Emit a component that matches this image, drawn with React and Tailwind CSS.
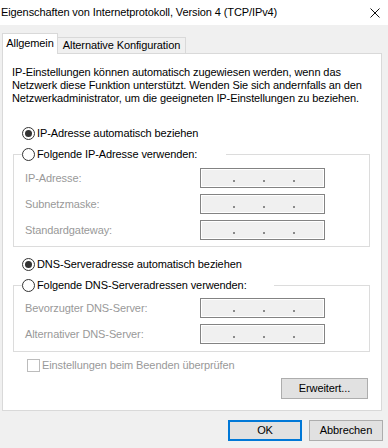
import React from "react";

function Radio({ checked }) {
  return (
    <span className="w-[13px] h-[13px] rounded-full border border-[#333333] bg-white flex items-center justify-center shrink-0">
      {checked && <span className="w-[7px] h-[7px] rounded-full bg-[#333333]" />}
    </span>
  );
}

function IpField() {
  return (
    <div className="w-[125px] h-[20px] border border-[#838383] bg-[#f0f0f0] shadow-[inset_0_0_0_1px_#ffffff] flex items-end pb-[5px] pl-[32px] gap-[28px]">
      <span className="w-[2px] h-[2px] bg-[#8a8a8a]" />
      <span className="w-[2px] h-[2px] bg-[#8a8a8a]" />
      <span className="w-[2px] h-[2px] bg-[#8a8a8a]" />
    </div>
  );
}

function FieldRow({ label }) {
  return (
    <div className="flex items-center h-[20px] pl-[11px]">
      <span className="w-[175px] text-[#999999]">{label}</span>
      <IpField />
    </div>
  );
}

export default function App() {
  return (
    <div
      className="w-[388px] h-[448px] bg-[#f0f0f0] overflow-hidden text-[11px] tracking-[-0.1px] leading-[13px] text-black flex flex-col whitespace-nowrap"
      style={{ fontFamily: '"Liberation Sans", Arial, sans-serif' }}
    >
      <div className="h-[25px] bg-white flex items-center justify-between pl-[1px] pr-[8px]">
        <span className="text-[11px]">Eigenschaften von Internetprotokoll, Version 4 (TCP/IPv4)</span>
        <svg width="10" height="10" viewBox="0 0 10 10" className="shrink-0">
          <path d="M0.5 0.5 L9.5 9.5 M9.5 0.5 L0.5 9.5" stroke="#111" strokeWidth="1" />
        </svg>
      </div>

      <div className="pt-[8px] pl-[2px]">
        <div className="flex items-end h-[20px]">
          <div className="relative z-10 w-[56px] h-[21px] mb-[-1px] bg-white border border-b-0 border-[#d9d9d9] flex items-center justify-center pb-[2px]">
            Allgemein
          </div>
          <div className="w-[128px] h-[16px] border-t border-r border-[#d9d9d9] bg-[#f0f0f0] flex items-center justify-center">
            Alternative Konfiguration
          </div>
        </div>

        <div className="w-[380px] h-[358px] bg-white border border-[#d9d9d9] flex flex-col">
          <p className="pl-[9px] pt-[12px] leading-[13px]">
            IP-Einstellungen können automatisch zugewiesen werden, wenn das
            <br />
            Netzwerk diese Funktion unterstützt. Wenden Sie sich andernfalls an den
            <br />
            Netzwerkadministrator, um die geeigneten IP-Einstellungen zu beziehen.
          </p>

          <div className="mt-[20px] h-[16px] flex items-center gap-[2px] pl-[19px]">
            <Radio checked />
            <span>IP-Adresse automatisch beziehen</span>
          </div>

          <fieldset className="mt-[5px] ml-[10px] w-[357px] border border-[#dcdcdc] pb-[6px]">
            <legend className="ml-[8px] w-[204px] h-[16px] flex items-center gap-[2px]">
              <Radio />
              <span>Folgende IP-Adresse verwenden:</span>
            </legend>
            <div className="mt-[6px] flex flex-col gap-[6px]">
              <FieldRow label="IP-Adresse:" />
              <FieldRow label="Subnetzmaske:" />
              <FieldRow label="Standardgateway:" />
            </div>
          </fieldset>

          <div className="mt-[9px] h-[16px] flex items-center gap-[2px] pl-[19px]">
            <Radio checked />
            <span>DNS-Serveradresse automatisch beziehen</span>
          </div>

          <fieldset className="mt-[5px] ml-[10px] w-[357px] border border-[#dcdcdc] pb-[7px]">
            <legend className="ml-[8px] w-[252px] h-[16px] flex items-center gap-[2px]">
              <Radio />
              <span>Folgende DNS-Serveradressen verwenden:</span>
            </legend>
            <div className="mt-[5px] flex flex-col gap-[6px]">
              <FieldRow label="Bevorzugter DNS-Server:" />
              <FieldRow label="Alternativer DNS-Server:" />
            </div>
          </fieldset>

          <div className="mt-[5px] h-[16px] flex items-center gap-[2px] pl-[24px]">
            <span className="w-[13px] h-[13px] border border-[#bcbcbc] bg-white shrink-0" />
            <span className="text-[#999999]">Einstellungen beim Beenden überprüfen</span>
          </div>

          <div className="mt-[5px] flex justify-end pr-[13px]">
            <button className="w-[87px] h-[21px] bg-[#e1e1e1] border border-[#adadad] flex items-center justify-center">
              Erweitert...
            </button>
          </div>
        </div>
      </div>

      <div className="mt-[9px] flex justify-end gap-[7px] pr-[5px]">
        <button className="w-[74px] h-[21px] bg-[#e1e1e1] border-2 border-[#0078d7] flex items-center justify-center">
          OK
        </button>
        <button className="w-[74px] h-[21px] bg-[#e1e1e1] border border-[#adadad] flex items-center justify-center">
          Abbrechen
        </button>
      </div>
    </div>
  );
}
